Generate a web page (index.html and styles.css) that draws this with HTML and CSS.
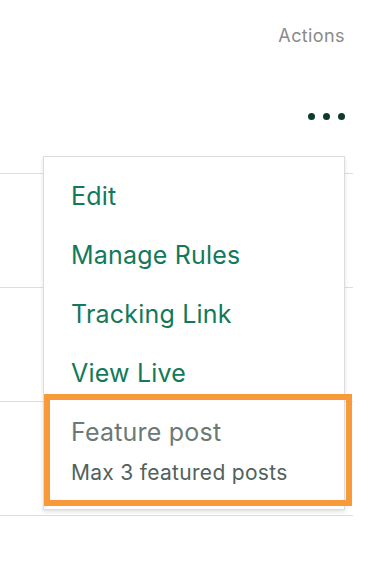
FILE: index.html
```html
<!DOCTYPE html>
<html lang="en">
<head>
    <meta charset="UTF-8">
    <meta name="viewport" content="width=device-width, initial-scale=1.0">
    <title>Posts - Actions</title>
    <link rel="stylesheet" href="styles.css">
</head>
<body>
    <div class="table">
        <div class="table-head">Actions</div>
        <div class="row">
            <button class="more" aria-label="More actions">
                <span class="dot"></span><span class="dot"></span><span class="dot"></span>
            </button>
        </div>
        <div class="row"></div>
        <div class="row"></div>
        <div class="row"></div>

        <div class="menu">
            <div class="menu-item">Edit</div>
            <div class="menu-item">Manage Rules</div>
            <div class="menu-item">Tracking Link</div>
            <div class="menu-item">View Live</div>
            <div class="menu-item feature">
                <div class="feature-title">Feature post</div>
                <div class="feature-note">Max 3 featured posts</div>
            </div>
        </div>
    </div>
</body>
</html>
```

FILE: styles.css
```css
body {
    margin: 0;
    font-family: Inter, "Liberation Sans", sans-serif;
    background-color: #fff;
}
.table {
    position: relative;
    width: 353px;
}
.table-head {
    height: 60px;
    display: flex;
    align-items: center;
    justify-content: flex-end;
    padding: 10px 8px 0 0;
    box-sizing: border-box;
    font-size: 18px;
    letter-spacing: 0.4px;
    color: #8a8a8a;
}
.row {
    height: 114px;
    box-sizing: border-box;
    border-bottom: 1px solid #dedede;
    display: flex;
    align-items: center;
    justify-content: flex-end;
    padding-right: 8px;
}
.more {
    display: flex;
    gap: 8px;
    padding: 0;
    border: none;
    background: none;
    cursor: pointer;
}
.dot {
    width: 7px;
    height: 7px;
    border-radius: 50%;
    background-color: #0f3a2e;
}
.menu {
    position: absolute;
    top: 156px;
    left: 43px;
    width: 302px;
    box-sizing: border-box;
    padding: 9px 0;
    background-color: #fff;
    border: 1px solid #dcdcdc;
    box-shadow: 0 2px 4px rgba(0, 0, 0, 0.12);
}
.menu-item {
    height: 59px;
    display: flex;
    align-items: center;
    padding: 0 27px;
    font-size: 25px;
    letter-spacing: 0.2px;
    color: #13795a;
    cursor: pointer;
}
.menu-item.feature {
    position: relative;
    height: auto;
    display: block;
    padding: 16px 27px 15px;
    cursor: default;
}
.feature::after {
    content: "";
    position: absolute;
    top: -8px;
    left: 0;
    width: 308px;
    height: 112px;
    box-sizing: border-box;
    border: 6px solid #f8993a;
}
.feature-title {
    line-height: 28px;
    color: #6c7a75;
}
.feature-note {
    margin-top: 15px;
    line-height: 24px;
    font-size: 21px;
    letter-spacing: 0.3px;
    color: #53615c;
}
```
